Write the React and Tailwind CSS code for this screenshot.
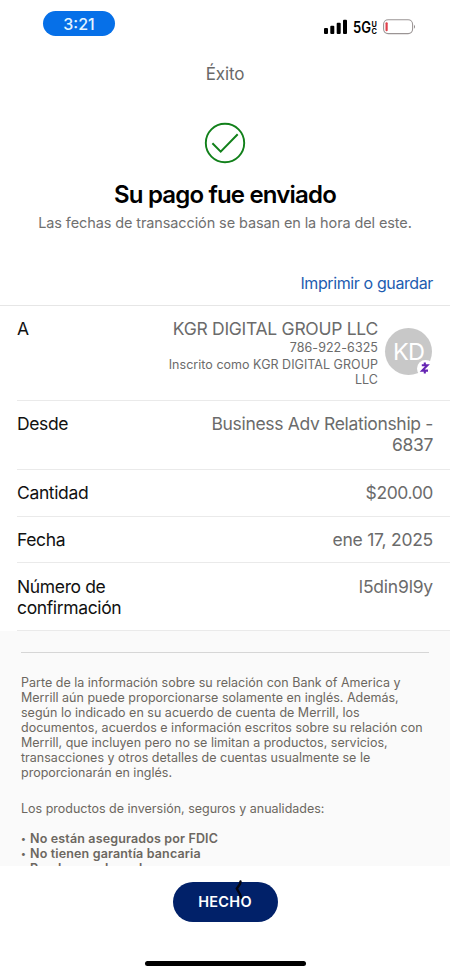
import React from "react";

function StatusBar() {
  return (
    <div className="flex h-[47px] items-start justify-between pl-[43px] pr-[34px]">
      <div className="mt-[11px] flex h-[25px] w-[72px] items-center justify-center rounded-full bg-[#0670e8] text-[16px] font-medium text-[#e4f4ff]">
        3:21
      </div>
      <svg className="mt-[17px]" width="93" height="20" viewBox="323 17 93 20">
        <rect x="324" y="28" width="4" height="6" rx="1" />
        <rect x="330.3" y="25.7" width="4" height="8.3" rx="1" />
        <rect x="336.7" y="22.7" width="4" height="11.3" rx="1" />
        <rect x="343" y="19.7" width="4" height="14.3" rx="1" />
        <text x="353" y="33.3" fontSize="15.5" fontWeight="600" textLength="18" lengthAdjust="spacingAndGlyphs">5G</text>
        <text x="371.6" y="27" fontSize="7.3" fontWeight="700">U</text>
        <text x="371.6" y="33.8" fontSize="7.3" fontWeight="700">C</text>
        <rect x="383.6" y="19.8" width="29" height="13.8" rx="4.5" fill="white" stroke="#9b9595" strokeWidth="1.1" />
        <rect x="385.5" y="22.3" width="2.2" height="9" rx="1" fill="#e0404a" />
        <path d="M414 24.8 Q416 26.8 414 28.8Z" fill="#8c8686" />
      </svg>
    </div>
  );
}

function Row({ label, className, children }) {
  return (
    <div className={"ml-[17px] flex justify-between border-b border-[#eaeaea] pr-[17px] text-[17.5px] leading-[21px] " + className}>
      <div className="whitespace-nowrap tracking-[-0.36px] text-[#111]">{label}</div>
      <div className="whitespace-nowrap text-right text-[#6b6b6b]">{children}</div>
    </div>
  );
}

export default function App() {
  return (
    <div className="flex h-[975px] w-[450px] flex-col overflow-hidden bg-white font-['Inter','Liberation_Sans',sans-serif]">
      <StatusBar />
      <div className="mt-[17px] text-center text-[17px] leading-[20px] tracking-[-0.1px] text-[#696969]">Éxito</div>
      <svg className="mx-auto mt-[38px] shrink-0" width="42" height="42" viewBox="0 0 42 42" fill="none" stroke="#11801a" strokeWidth="1.9">
        <circle cx="21" cy="21" r="19.2" />
        <path d="M8.4 21.2 L16.7 29.6 L33.7 12.2" strokeWidth="2" />
      </svg>
      <h1 className="mt-[16px] whitespace-nowrap text-center text-[24px] font-semibold leading-[30px] tracking-[-0.82px] text-black">
        Su pago fue enviado
      </h1>
      <p className="mt-[4px] whitespace-nowrap text-center text-[14.5px] leading-[18px] tracking-[-0.11px] text-[#707070]">
        Las fechas de transacción se basan en la hora del este.
      </p>
      <a className="mt-[41px] whitespace-nowrap pr-[17px] text-right text-[16px] leading-[20px] tracking-[-0.39px] text-[#1d5cb0]">Imprimir o guardar</a>
      <div className="mt-[12px] border-t border-[#e6e6e6]">
        <Row label="A" className="h-[95px] pt-[12px]">
          <div className="flex gap-[7px]">
            <div>
              <div className="tracking-[-0.28px]">KGR DIGITAL GROUP LLC</div>
              <div className="mt-[1px] text-[12.5px] leading-[15px] tracking-[0.05px]">786-922-6325</div>
              <div className="mt-[2px] text-[12.5px] leading-[15px] tracking-[0.03px]">
                Inscrito como KGR DIGITAL GROUP
                <br />
                LLC
              </div>
            </div>
            <div className="relative mr-px mt-[10px] flex h-[47px] w-[47px] items-center justify-center rounded-full bg-[#c8c8c8] text-[23.5px] tracking-[-0.8px] text-white">
              KD
              <svg className="absolute -right-[2px] bottom-[-2px]" width="17" height="17" viewBox="0 0 17 17">
                <circle cx="8.5" cy="8.5" r="8.5" fill="white" />
                <path d="M4.8 5.3h5.6L5.2 10.6h5.8M7.8 2.4v2.9M7.8 10.6v3" fill="none" stroke="#6525b3" strokeWidth="2.1" />
              </svg>
            </div>
          </div>
        </Row>
        <Row label="Desde" className="h-[69px] pt-[12px]">
          <span className="tracking-[-0.33px]">Business Adv Relationship -<br />6837</span>
        </Row>
        <Row label="Cantidad" className="h-[47px] pt-[12px]"><span className="tracking-[-0.4px]">$200.00</span></Row>
        <Row label="Fecha" className="h-[46px] pt-[12px]"><span className="tracking-[-0.25px]">ene 17, 2025</span></Row>
        <Row label={<>Número de<br />confirmación</>} className="h-[68px] pt-[13px]"><span className="tracking-[-0.2px]">l5din9l9y</span></Row>
      </div>
      <div className="h-[235px] shrink-0 overflow-hidden bg-[#fafafa] px-[21px] pt-[21px] text-[12.5px] leading-[15.1px] text-[#6c6760]">
        <div className="h-px bg-[#d6d6d6]" />
        <p className="mt-[21.5px] whitespace-nowrap tracking-[0.01px]">
          Parte de la información sobre su relación con Bank of America y<br />
          Merrill aún puede proporcionarse solamente en inglés. Además,<br />
          según lo indicado en su acuerdo de cuenta de Merrill, los<br />
          documentos, acuerdos e información escritos sobre su relación con<br />
          Merrill, que incluyen pero no se limitan a productos, servicios,<br />
          transacciones y otros detalles de cuentas usualmente se le<br />
          proporcionarán en inglés.
        </p>
        <p className="mt-[21px] whitespace-nowrap">Los productos de inversión, seguros y anualidades:</p>
        <ul className="mt-[15px] font-semibold tracking-[0.15px]">
          {["No están asegurados por FDIC", "No tienen garantía bancaria", "Pueden perder valor"].map((t) => (
            <li key={t} className="flex whitespace-nowrap">
              <span className="w-[9px] text-[9.5px]">•</span>
              <span>{t}</span>
            </li>
          ))}
        </ul>
      </div>
      <div className="flex flex-1 flex-col items-center pt-[16px]">
        <button className="relative flex h-[40px] w-[105px] items-center justify-center rounded-full bg-[#012169] text-[14.5px] font-semibold tracking-[0.3px] text-white">
          HECHO
          <svg className="absolute left-[60px] top-[-2px]" width="12" height="20" viewBox="0 0 12 20" fill="none" stroke="#050510" strokeWidth="2.4" strokeLinecap="round">
            <path d="M7.5 1.5 L7 4 L3.8 8.5 L7 14.5 L8 17.5" />
          </svg>
        </button>
        <div className="mt-[39px] h-[5px] w-[161px] rounded-full bg-black" />
      </div>
    </div>
  );
}
